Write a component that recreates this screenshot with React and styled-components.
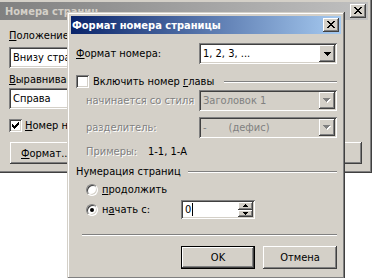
import React from "react";
import styled, { createGlobalStyle, css } from "styled-components";

const GlobalStyle = createGlobalStyle`
  html, body {
    margin: 0;
    padding: 0;
    background: #ffffff;
  }
  * {
    box-sizing: border-box;
  }
`;

const FACE = "#d4d0c8";
const SHADOW = "#808080";
const DARK = "#404040";

const raised = css`
  background: ${FACE};
  box-shadow: inset -1px -1px ${DARK}, inset 1px 1px #ffffff,
    inset -2px -2px ${SHADOW}, inset 2px 2px ${FACE};
`;

const sunken = css`
  box-shadow: inset 1px 1px ${SHADOW}, inset -1px -1px #ffffff,
    inset 2px 2px ${DARK}, inset -2px -2px ${FACE};
`;

const Desktop = styled.div`
  position: relative;
  width: 372px;
  height: 278px;
  overflow: hidden;
  background: #ffffff;
  font-family: "DejaVu Sans Condensed", "Liberation Sans", sans-serif;
  font-size: 11px;
  color: #000000;
`;

const Window = styled.div`
  position: absolute;
  left: ${({ $x }) => $x}px;
  top: ${({ $y }) => $y}px;
  width: ${({ $w }) => $w}px;
  height: ${({ $h }) => $h}px;
  padding: 4px;
  display: flex;
  flex-direction: column;
  background: ${FACE};
  box-shadow: inset -1px -1px ${DARK}, inset 1px 1px ${FACE},
    inset -2px -2px ${SHADOW}, inset 2px 2px #ffffff;
`;

const TitleBar = styled.div`
  height: 18px;
  flex: none;
  display: flex;
  align-items: center;
  padding-left: ${({ $inset }) => $inset}px;
  padding-right: 2px;
  background: ${({ $active }) =>
    $active
      ? "linear-gradient(to right, #0a246a, #a6caf0)"
      : "linear-gradient(to right, #808080, #c0c0c0)"};
  color: ${({ $active }) => ($active ? "#ffffff" : FACE)};
  font-weight: bold;
`;

const TitleText = styled.span`
  flex: 1;
  white-space: nowrap;
`;

const CloseButton = styled.div`
  ${raised};
  width: 16px;
  height: 14px;
  display: flex;
  align-items: center;
  justify-content: center;
  padding: 0 0 1px 0;
`;

const Body = styled.div`
  display: flex;
  flex-direction: column;
  padding: 0 ${({ $right }) => $right}px 0 ${({ $left }) => $left}px;
`;

const Row = styled.div`
  display: flex;
  align-items: center;
  height: ${({ $h }) => $h || 13}px;
  margin-top: ${({ $mt }) => $mt || 0}px;
  padding-left: ${({ $indent }) => $indent || 0}px;
  white-space: pre;
`;

const Label = styled.span`
  width: ${({ $w }) => ($w ? `${$w}px` : "auto")};
  flex: none;
  white-space: pre;
  color: ${({ $disabled }) => ($disabled ? SHADOW : "#000000")};
  text-shadow: ${({ $disabled }) => ($disabled ? "1px 1px #ffffff" : "none")};
`;

const Key = styled.span`
  text-decoration: underline;
  text-underline-offset: 1px;
`;

const Combo = styled.div`
  ${sunken};
  width: ${({ $w }) => $w}px;
  height: 21px;
  flex: none;
  display: flex;
  align-items: center;
  padding: 2px;
  background: ${({ $disabled }) => ($disabled ? FACE : "#ffffff")};
  color: ${({ $disabled }) => ($disabled ? SHADOW : "#000000")};
`;

const ComboText = styled.span`
  flex: 1;
  padding-left: 2px;
  white-space: pre;
  overflow: hidden;
`;

const DropButton = styled.div`
  ${raised};
  width: 16px;
  height: 17px;
  flex: none;
  display: flex;
  align-items: center;
  justify-content: center;
`;

const CheckBox = styled.div`
  ${sunken};
  width: 13px;
  height: 13px;
  flex: none;
  background: #ffffff;
  display: flex;
  align-items: center;
  justify-content: center;
  margin-right: ${({ $gap }) => $gap}px;
`;

const Radio = styled.div`
  position: relative;
  width: 12px;
  height: 12px;
  flex: none;
  border-radius: 50%;
  background: #ffffff;
  border: 1px solid;
  border-color: ${SHADOW} #ffffff #ffffff ${SHADOW};
  box-shadow: inset 1px 1px ${DARK}, inset -1px -1px ${FACE};
  margin-right: 4px;
  display: flex;
  align-items: center;
  justify-content: center;
`;

const RadioDot = styled.div`
  width: 4px;
  height: 4px;
  border-radius: 50%;
  background: #000000;
`;

const GroupLine = styled.div`
  flex: 1;
  height: 2px;
  margin-left: ${({ $ml }) => $ml}px;
  border-top: 1px solid ${SHADOW};
  border-bottom: 1px solid #ffffff;
`;

const Separator = styled.div`
  height: 2px;
  margin: ${({ $mt }) => $mt}px 0 0 ${({ $ml }) => $ml}px;
  border-top: 1px solid ${SHADOW};
  border-bottom: 1px solid #ffffff;
`;

const SpinField = styled.div`
  ${sunken};
  width: 74px;
  height: 19px;
  display: flex;
  align-items: center;
  padding: 2px;
  background: #ffffff;
`;

const SpinText = styled.span`
  flex: 1;
  display: flex;
  align-items: center;
  padding-left: 2px;
`;

const Caret = styled.span`
  width: 1px;
  height: 13px;
  margin-left: 1px;
  background: #000000;
`;

const SpinButtons = styled.div`
  display: flex;
  flex-direction: column;
  height: 15px;
`;

const SpinButton = styled.div`
  ${raised};
  width: 15px;
  flex: 1;
  display: flex;
  align-items: center;
  justify-content: center;
`;

const ButtonRow = styled.div`
  display: flex;
  justify-content: ${({ $spread }) => ($spread ? "space-between" : "flex-end")};
  gap: 8px;
  margin-top: ${({ $mt }) => $mt}px;
  padding: 0 ${({ $pr }) => $pr || 0}px 0 ${({ $pl }) => $pl || 0}px;
`;

const Button = styled.div`
  ${raised};
  width: ${({ $w }) => $w || 74}px;
  height: ${({ $h }) => $h || 23}px;
  display: flex;
  align-items: center;
  justify-content: ${({ $left }) => ($left ? "flex-start" : "center")};
  padding-left: ${({ $left }) => ($left ? "11px" : "0")};
  ${({ $default }) =>
    $default &&
    css`
      box-shadow: inset 0 0 0 1px #000000, inset -2px -2px ${DARK},
        inset 2px 2px #ffffff, inset -3px -3px ${SHADOW};
    `}
`;

const Pixels = ({ d, w, h, color = "#000000", shadow }) => (
  <svg
    width={w + (shadow ? 1 : 0)}
    height={h + (shadow ? 1 : 0)}
    viewBox={`0 0 ${w + (shadow ? 1 : 0)} ${h + (shadow ? 1 : 0)}`}
    shapeRendering="crispEdges"
  >
    {shadow && <path d={d} fill="#ffffff" transform="translate(1 1)" />}
    <path d={d} fill={color} />
  </svg>
);

const CLOSE =
  "M0 0h2v1H0zM6 0h2v1H6zM1 1h2v1H1zM5 1h2v1H5zM2 2h4v1H2zM3 3h2v1H3zM2 4h4v1H2zM1 5h2v1H1zM5 5h2v1H5zM0 6h2v1H0zM6 6h2v1H6z";
const ARROW_DOWN = "M0 0h7v1H0zM1 1h5v1H1zM2 2h3v1H2zM3 3h1v1H3z";
const SMALL_UP = "M2 0h1v1H2zM1 1h3v1H1zM0 2h5v1H0z";
const SMALL_DOWN = "M0 0h5v1H0zM1 1h3v1H1zM2 2h1v1H2z";
const CHECK =
  "M6 0h1v1H6zM5 1h2v1H5zM0 2h1v1H0zM4 2h3v1H4zM0 3h2v1H0zM3 3h3v1H3zM0 4h5v1H0zM1 5h3v1H1zM2 6h1v1H2z";

const Close = () => (
  <CloseButton>
    <Pixels d={CLOSE} w={8} h={7} />
  </CloseButton>
);

const Dropdown = ({ children, width, disabled }) => (
  <Combo $w={width} $disabled={disabled}>
    <ComboText>{children}</ComboText>
    <DropButton>
      <Pixels
        d={ARROW_DOWN}
        w={7}
        h={4}
        color={disabled ? SHADOW : "#000000"}
        shadow={disabled}
      />
    </DropButton>
  </Combo>
);

const PageNumbers = () => (
  <Window $x={-4} $y={-2} $w={376} $h={175}>
    <TitleBar $inset={5}>
      <TitleText>Номера страниц</TitleText>
      <Close />
    </TitleBar>
    <Body $left={9} $right={6}>
      <Row $mt={9}>
        <Label>
          <Key>П</Key>оложение:
        </Label>
      </Row>
      <Row $h={21} $mt={5}>
        <Dropdown width={200}>Внизу страницы (нижний колонтитул)</Dropdown>
      </Row>
      <Row $mt={5}>
        <Label>
          <Key>В</Key>ыравнивание:
        </Label>
      </Row>
      <Row $h={21} $mt={2}>
        <Dropdown width={200}>Справа</Dropdown>
      </Row>
      <Row $mt={10}>
        <CheckBox $gap={3}>
          <Pixels d={CHECK} w={7} h={7} />
        </CheckBox>
        <Label>
          <Key>Н</Key>омер на первой странице
        </Label>
      </Row>
    </Body>
    <ButtonRow $spread $mt={10} $pl={10} $pr={6}>
      <Button $w={75} $h={22} $left>
        <span>
          <Key>Ф</Key>ормат...
        </span>
      </Button>
      <Button $w={75} $h={22}>
        Отмена
      </Button>
    </ButtonRow>
  </Window>
);

const PageNumberFormat = () => (
  <Window $x={67} $y={12} $w={278} $h={267}>
    <TitleBar $active $inset={1}>
      <TitleText>Формат номера страницы</TitleText>
      <Close />
    </TitleBar>
    <Body $left={5} $right={4}>
      <Row $h={21} $mt={9}>
        <Label $w={123}>
          <Key>Ф</Key>ормат номера:
        </Label>
        <Dropdown width={138}>1, 2, 3, ...</Dropdown>
      </Row>
      <Row $mt={11}>
        <CheckBox $gap={4} />
        <Label>
          Включить номер <Key>г</Key>лавы
        </Label>
        <GroupLine $ml={10} />
      </Row>
      <Row $h={21} $mt={2} $indent={10}>
        <Label $w={113} $disabled>
          начинается со стиля
        </Label>
        <Dropdown width={138} disabled>
          Заголовок 1
        </Dropdown>
      </Row>
      <Row $h={21} $mt={6} $indent={10}>
        <Label $w={113} $disabled>
          разделитель:
        </Label>
        <Dropdown width={138} disabled>
          {"-       (дефис)"}
        </Dropdown>
      </Row>
      <Row $mt={7} $indent={10}>
        <Label $w={62} $disabled>
          Примеры:
        </Label>
        <Label>1-1, 1-А</Label>
      </Row>
      <Row $mt={7}>
        <Label>Нумерация страниц</Label>
        <GroupLine $ml={7} />
      </Row>
      <Row $mt={5} $indent={10}>
        <Radio />
        <Label>
          <Key>п</Key>родолжить
        </Label>
      </Row>
      <Row $h={19} $mt={4} $indent={10}>
        <Radio>
          <RadioDot />
        </Radio>
        <Label $w={79}>
          н<Key>а</Key>чать с:
        </Label>
        <SpinField>
          <SpinText>
            0<Caret />
          </SpinText>
          <SpinButtons>
            <SpinButton>
              <Pixels d={SMALL_UP} w={5} h={3} />
            </SpinButton>
            <SpinButton>
              <Pixels d={SMALL_DOWN} w={5} h={3} />
            </SpinButton>
          </SpinButtons>
        </SpinField>
      </Row>
      <Separator $mt={15} $ml={6} />
      <ButtonRow $mt={10}>
        <Button $default>OK</Button>
        <Button>Отмена</Button>
      </ButtonRow>
    </Body>
  </Window>
);

export default function App() {
  return (
    <>
      <GlobalStyle />
      <Desktop>
        <PageNumbers />
        <PageNumberFormat />
      </Desktop>
    </>
  );
}
